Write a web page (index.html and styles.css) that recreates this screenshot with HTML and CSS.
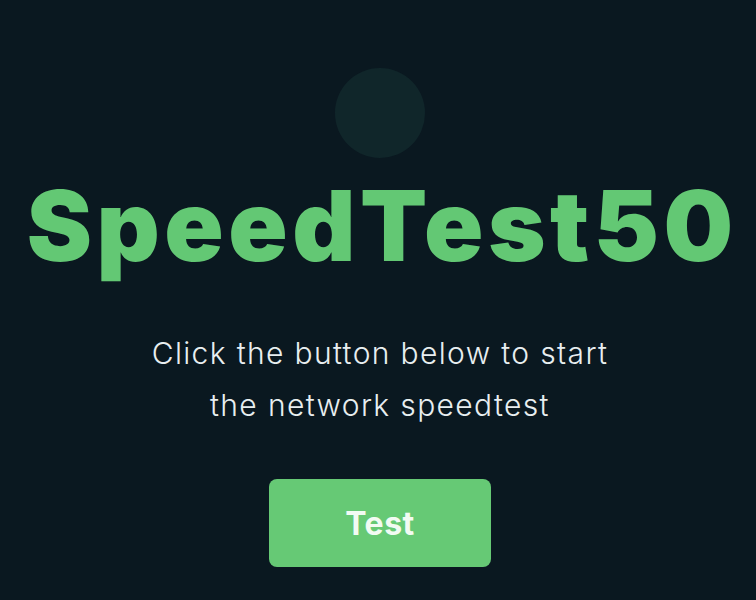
FILE: index.html
```html
<!DOCTYPE html>
<html>
<head>
<meta charset="utf-8">
<link rel="stylesheet" href="styles.css">
</head>
<body>
<main class="page">
  <div class="dot"></div>
  <h1 class="title">SpeedTest50</h1>
  <p class="lead">Click the button below to start<br>the network speedtest</p>
  <button class="btn">Test</button>
</main>
</body>
</html>
```
FILE: styles.css
```css
html, body {
  margin: 0;
  padding: 0;
  background: #0a1820;
}
.page {
  box-sizing: border-box;
  width: 756px;
  height: 600px;
  padding-left: 4px;
  display: flex;
  flex-direction: column;
  align-items: center;
  font-family: Inter, "Noto Sans", sans-serif;
}
.dot {
  width: 90px;
  height: 90px;
  border-radius: 50%;
  background: #10262a;
  margin-top: 68px;
}
.title {
  margin: 8px 0 0 0;
  font-size: 98px;
  font-weight: 900;
  line-height: 120px;
  color: #63c874;
  letter-spacing: 4.5px;
  text-indent: 4.5px;
}
.lead {
  margin: 41px 0 0 0;
  font-size: 30px;
  font-weight: 300;
  line-height: 52px;
  letter-spacing: 1.35px;
  text-align: center;
  color: #e8eef0;
}
.btn {
  margin-top: 48px;
  width: 222px;
  height: 88px;
  border: none;
  border-radius: 8px;
  background: #66c975;
  color: #f2fbf3;
  font-family: Inter, "Noto Sans", sans-serif;
  font-size: 32px;
  font-weight: 700;
  letter-spacing: 0.5px;
}
```
